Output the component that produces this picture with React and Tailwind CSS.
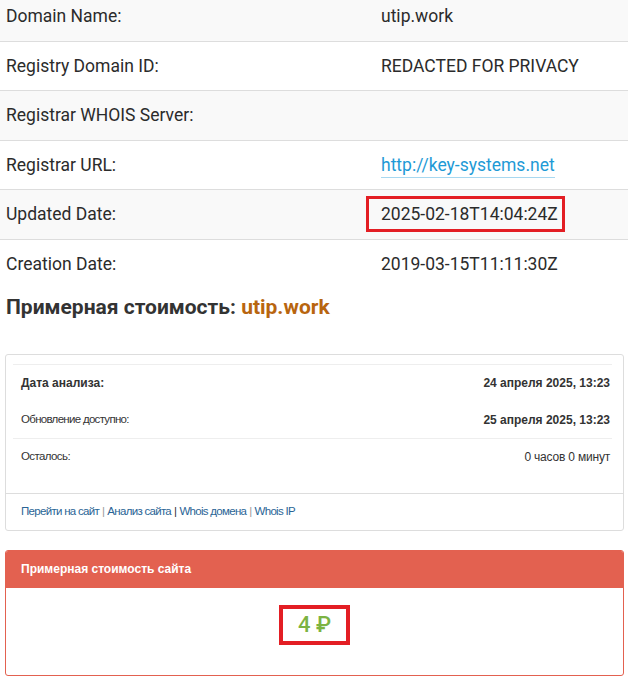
import React from 'react';

const rows = [
  { label: 'Domain Name:', value: 'utip.work' },
  { label: 'Registry Domain ID:', value: 'REDACTED FOR PRIVACY' },
  { label: 'Registrar WHOIS Server:', value: '' },
  { label: 'Registrar URL:', value: 'http://key-systems.net', link: true },
  { label: 'Updated Date:', value: '2025-02-18T14:04:24Z', mark: true },
  { label: 'Creation Date:', value: '2019-03-15T11:11:30Z' },
];

const WhoisRow = ({ row, index, last }) => (
  <div
    className={`grid grid-cols-[375px_1fr] items-center h-[49.5px] px-[6px] ${
      index % 2 === 0 ? 'bg-[#f9f9f9]' : 'bg-white'
    } ${last ? '' : 'border-b border-[#dddddd]'}`}
  >
    <div>{row.label}</div>
    <div>
      {row.link ? (
        <a href="#" className="text-[#1e9ad6] border-b border-[#a8d8f0] pb-[2px]">
          {row.value}
        </a>
      ) : row.mark ? (
        <span className="inline-block -ml-[15px] pl-[12px] pr-[4px] py-[2px] border-[3px] border-[#e31e24]">
          {row.value}
        </span>
      ) : (
        row.value
      )}
    </div>
  </div>
);

const App = () => {
  return (
    <div className="min-h-screen bg-white overflow-hidden text-[#333333]">
      {/* whois table */}
      <div className="-mt-[8px] text-[17.5px] font-['Roboto',sans-serif] text-[#2b2b2b]">
        {rows.map((row, i) => (
          <WhoisRow key={row.label} row={row} index={i} last={i === rows.length - 1} />
        ))}
      </div>

      <h2 className="px-[6px] pt-[3px] text-[21px] font-bold font-['Roboto',sans-serif] text-[#333333]">
        Примерная стоимость: <span className="text-[#b8650f]">utip.work</span>
      </h2>

      {/* analysis info */}
      <div className="ml-[5px] mr-[4px] mt-[30px] border border-[#dddddd] rounded-[3px] font-['Liberation_Sans',Arial,sans-serif] text-[12px]">
        <div className="pt-[9px] pb-[17px] pl-[7px] pr-[11px]">
          <div className="border-t border-[#eeeeee]">
            <div className="flex justify-between items-center h-[37px] pl-[8px] pr-[2px] font-bold">
              <span>Дата анализа:</span>
              <span>24 апреля 2025, 13:23</span>
            </div>
            <div className="flex justify-between items-center h-[37px] pl-[8px] pr-[2px] border-b border-[#eeeeee]">
              <span className="text-[11.5px] tracking-[-0.7px]">Обновление доступно:</span>
              <span className="font-bold">25 апреля 2025, 13:23</span>
            </div>
            <div className="flex justify-between items-center h-[37px] pl-[8px] pr-[2px]">
              <span className="text-[11.5px] tracking-[-0.6px]">Осталось:</span>
              <span className="tracking-[-0.2px]">0 часов 0 минут</span>
            </div>
          </div>
        </div>
        <div className="border-t border-[#dddddd] h-[37px] flex items-center px-[15px] text-[#2a6496] text-[11.5px] tracking-[-0.7px]">
          <a href="#">Перейти на сайт</a>
          <span className="text-[#999999] px-[3px]">|</span>
          <a href="#">Анализ сайта</a>
          <span className="text-[#333333] px-[3px]">|</span>
          <a href="#">Whois домена</a>
          <span className="text-[#999999] px-[3px]">|</span>
          <a href="#">Whois IP</a>
        </div>
      </div>

      {/* estimated cost */}
      <div className="ml-[5px] mr-[4px] mt-[19px] border border-[#e36150] rounded-[3px] overflow-hidden font-['Liberation_Sans',Arial,sans-serif]">
        <div className="bg-[#e36150] h-[37px] flex items-center px-[15px] text-white text-[12px] font-bold">
          Примерная стоимость сайта
        </div>
        <div className="h-[87px] flex justify-center pt-[17px]">
          <div className="h-[40px] px-[15px] flex items-center border-[4px] border-[#e31e24] text-[#7cb342] text-[22px] font-medium font-['Roboto',sans-serif]">
            4 ₽
          </div>
        </div>
      </div>
    </div>
  );
};

export default App;
